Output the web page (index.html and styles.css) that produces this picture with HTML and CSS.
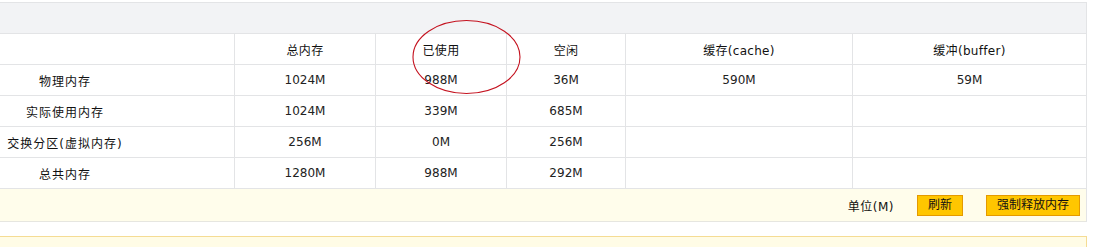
FILE: index.html
```html
<!DOCTYPE html>
<html lang="zh-CN">
<head>
<meta charset="utf-8">
<title>内存</title>
<link rel="stylesheet" href="styles.css">
</head>
<body>
<div class="page">
  <div class="panel">
    <div class="panel-head"></div>
    <table class="mem">
      <colgroup>
        <col class="c1"><col class="c2"><col class="c3"><col class="c4"><col class="c5"><col class="c6">
      </colgroup>
      <thead>
        <tr><th></th><th>总内存</th><th>已使用</th><th>空闲</th><th>缓存(cache)</th><th>缓冲(buffer)</th></tr>
      </thead>
      <tbody>
        <tr><td class="name">物理内存</td><td>1024M</td><td>988M</td><td>36M</td><td>590M</td><td>59M</td></tr>
        <tr><td class="name">实际使用内存</td><td>1024M</td><td>339M</td><td>685M</td><td></td><td></td></tr>
        <tr><td class="name">交换分区(虚拟内存)</td><td>256M</td><td>0M</td><td>256M</td><td></td><td></td></tr>
        <tr><td class="name">总共内存</td><td>1280M</td><td>988M</td><td>292M</td><td></td><td></td></tr>
      </tbody>
    </table>
    <div class="toolbar">
      <span class="unit">单位(M)</span>
      <button class="btn">刷新</button>
      <button class="btn">强制释放内存</button>
    </div>
  </div>
  <div class="notice"></div>
  <svg class="mark" width="112" height="78" viewBox="0 0 112 78">
    <ellipse cx="55.5" cy="38" rx="53.5" ry="36.5" fill="none" stroke="#c4121f" stroke-width="1.1"/>
  </svg>
</div>
</body>
</html>
```
FILE: styles.css
```css
html, body {
  margin: 0;
  padding: 0;
  background: #fff;
}
body {
  font-family: "DejaVu Sans", "Noto Sans CJK SC", sans-serif;
  font-size: 12px;
  color: #222;
  overflow: hidden;
}
.page {
  position: relative;
  padding-top: 2px;
  height: 245px;
  overflow: hidden;
}
.panel {
  margin-left: -104px;
  width: 1191px;
  box-sizing: border-box;
  border-top: 1px solid #e3e4e6;
  border-right: 1px solid #e3e4e6;
}
.panel-head {
  height: 30px;
  background: #f2f3f5;
  border-bottom: 1px solid #e3e4e6;
}
.mem {
  width: 1190px;
  table-layout: fixed;
  border-collapse: separate;
  border-spacing: 0;
}
.mem col.c1 { width: 338px; }
.mem col.c2 { width: 141px; }
.mem col.c3 { width: 131px; }
.mem col.c4 { width: 119px; }
.mem col.c5 { width: 227px; }
.mem col.c6 { width: 234px; }
.mem th, .mem td {
  height: 30px;
  padding: 0;
  box-sizing: border-box;
  text-align: center;
  font-weight: normal;
  border-bottom: 1px solid #e3e4e6;
  border-left: 1px solid #e3e4e6;
  color: #222;
}
.mem th:first-child, .mem td:first-child {
  border-left: none;
}
.mem th { color: #111; letter-spacing: 0.3px; }
.mem td.name { color: #111; letter-spacing: 1px; }
.mem tr { height: 31px; }
.toolbar {
  height: 32px;
  background: #fffdeb;
  border-bottom: 1px solid #e6e6e0;
  display: flex;
  align-items: center;
  justify-content: flex-end;
  padding-right: 6px;
  gap: 23px;
}
.unit {
  color: #111;
  letter-spacing: 0.5px;
}
.btn {
  font: inherit;
  color: #111;
  height: 21px;
  padding: 0 10px;
  margin: 0;
  background: #ffc600;
  border: 1px solid #e49a00;
  border-radius: 0;
  line-height: 19px;
  cursor: pointer;
}
.notice {
  margin-top: 14px;
  margin-left: -104px;
  width: 1191px;
  box-sizing: border-box;
  height: 40px;
  background: #fffce6;
  border: 1px solid #f5dc94;
}
.mark {
  position: absolute;
  left: 411px;
  top: 19px;
}
```
